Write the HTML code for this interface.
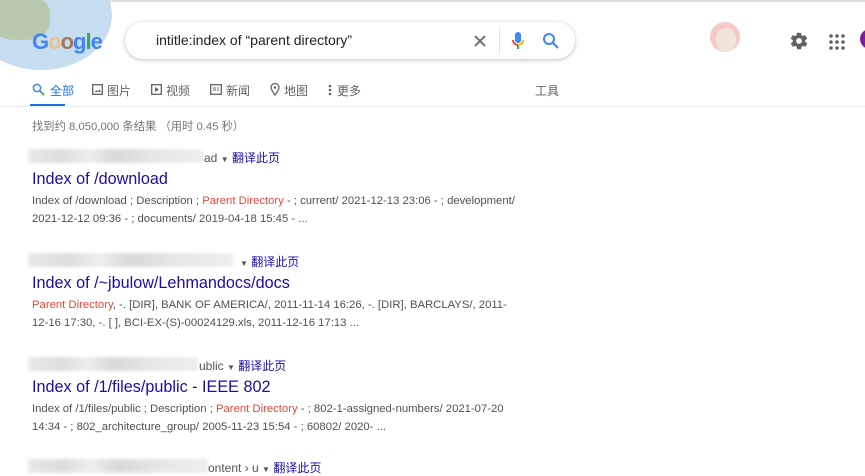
<!DOCTYPE html><html><head><meta charset="utf-8"><style>
*{margin:0;padding:0;box-sizing:border-box}
body{width:865px;height:470px;overflow:hidden;background:#fff;font-family:"Liberation Sans","Noto Sans CJK SC",sans-serif;position:relative}
.a{position:absolute;white-space:nowrap}
.blur{position:absolute;height:14px;background:linear-gradient(90deg,#e8e8e8,#ddd 20%,#eee 35%,#d8d8d8 50%,#e6e6e6 70%,#eee);filter:blur(1.5px)}
.u{font-size:12px;color:#555}
.tr{color:#1a0dab;font-size:12px}
.t{font-size:16.2px;color:#1a0dab}
.s{font-size:11.3px;color:#4d5156;line-height:18px}
.r{color:#e8463b}
.tab{position:absolute;top:82px;font-size:12px;color:#5f6368}
</style></head><body>
<div class="a" style="left:0;top:0;width:865px;height:2px;background:#e0e0e0"></div>
<div class="a" style="left:-30px;top:-40px;width:142px;height:110px;border-radius:50%;background:#c6dcef"></div>
<div class="a" style="left:-10px;top:-5px;width:60px;height:45px;border-radius:40%;background:#b9c9ad"></div>
<div class="a" style="left:32px;top:29px;font-size:22px;font-weight:bold;letter-spacing:-1px"><span style="color:#4285f4">G</span><span style="color:#f4c08a">o</span><span style="color:#a0785e">o</span><span style="color:#4285f4">g</span><span style="color:#34a853">l</span><span style="color:#4285f4">e</span></div>
<div class="a" style="left:125px;top:22px;width:450px;height:37px;border-radius:19px;background:#fff;box-shadow:0 1px 5px rgba(0,0,0,.25)"></div>
<div class="a" style="left:156px;top:32px;font-size:14px;color:#202124">intitle:index of “parent directory”</div>
<svg class="a" style="left:472px;top:33px" width="16" height="16"><path d="M3 3L13 13M13 3L3 13" stroke="#70757a" stroke-width="2"/></svg>
<div class="a" style="left:499px;top:28px;width:1px;height:26px;background:#dfe1e5"></div>
<svg class="a" style="left:511px;top:31px" width="14" height="20"><rect x="4" y="1" width="6" height="11" rx="3" fill="#4285f4"/><path d="M2 9a5 5 0 0010 0" stroke="#ea4335" stroke-width="1.8" fill="none"/><path d="M7 14v4" stroke="#34a853" stroke-width="2"/><path d="M12 9a5 5 0 01-5 5" stroke="#fbbc05" stroke-width="1.8" fill="none"/></svg>
<svg class="a" style="left:542px;top:32px" width="18" height="18"><circle cx="7" cy="7" r="5" stroke="#4285f4" stroke-width="2" fill="none"/><path d="M11 11l5 5" stroke="#4285f4" stroke-width="2.2"/></svg>
<div class="a" style="left:710px;top:22px;width:30px;height:30px;border-radius:50%;background:#f6c8c6"></div>
<div class="a" style="left:716px;top:28px;width:20px;height:24px;border-radius:45%;background:#efe3da"></div>
<svg class="a" style="left:789px;top:31px" width="20" height="20" viewBox="0 0 24 24"><path fill="#5f6368" d="M19.4 13c0-.3.1-.7.1-1s0-.7-.1-1l2.1-1.6c.2-.2.2-.4.1-.6l-2-3.5c-.1-.2-.4-.3-.6-.2l-2.5 1c-.5-.4-1.1-.7-1.700-1l-.4-2.6c0-.2-.2-.4-.5-.4h-4c-.2 0-.4.2-.5.4l-.4 2.6c-.6.3-1.2.6-1.7 1l-2.5-1c-.2-.1-.5 0-.6.2l-2 3.5c-.1.2-.1.5.1.6L4.6 11c0 .3-.1.7-.1 1s0 .7.1 1l-2.1 1.6c-.2.2-.2.4-.1.6l2 3.5c.1.2.4.3.6.2l2.5-1c.5.4 1.1.7 1.7 1l.4 2.6c0 .2.2.4.5.4h4c.2 0 .4-.2.5-.4l.4-2.6c.6-.3 1.2-.6 1.7-1l2.5 1c.2.1.5 0 .6-.2l2-3.5c.1-.2.1-.5-.1-.6L19.4 13zM12 15.5a3.5 3.5 0 110-7 3.5 3.5 0 010 7z"/><circle cx="12" cy="12" r="2.3" fill="#fff"/></svg>
<svg class="a" style="left:829px;top:34px" width="16" height="16"><g fill="#5f6368"><circle cx="2" cy="2" r="1.8"/><circle cx="8" cy="2" r="1.8"/><circle cx="14" cy="2" r="1.8"/><circle cx="2" cy="8" r="1.8"/><circle cx="8" cy="8" r="1.8"/><circle cx="14" cy="8" r="1.8"/><circle cx="2" cy="14" r="1.8"/><circle cx="8" cy="14" r="1.8"/><circle cx="14" cy="14" r="1.8"/></g></svg>
<div class="a" style="left:860px;top:29px;width:20px;height:20px;border-radius:50%;background:#7b1fa2"></div>
<svg class="a" style="left:32px;top:83px" width="13" height="13"><circle cx="5" cy="5" r="3.6" stroke="#4285f4" stroke-width="1.5" fill="none"/><path d="M8 8l4 4" stroke="#34a853" stroke-width="1.6"/></svg>
<div class="tab" style="left:50px;color:#1a73e8">全部</div>
<div class="a" style="left:30px;top:104px;width:35px;height:3px;background:#1a73e8"></div>
<svg class="a" style="left:92px;top:84px" width="11" height="11"><rect x=".7" y=".7" width="9.6" height="9.6" stroke="#5f6368" fill="none" stroke-width="1.3"/><path d="M2.5 8l2-2 1.5 1.5 1.5-2 1.5 2.5z" fill="#5f6368"/></svg>
<div class="tab" style="left:107px">图片</div>
<svg class="a" style="left:151px;top:84px" width="11" height="11"><rect x=".7" y=".7" width="9.6" height="9.6" stroke="#5f6368" fill="none" stroke-width="1.3"/><path d="M4 3v5l4-2.5z" fill="#5f6368"/></svg>
<div class="tab" style="left:166px">视频</div>
<svg class="a" style="left:210px;top:84px" width="12" height="11"><rect x=".7" y=".7" width="10.6" height="9.6" stroke="#5f6368" fill="none" stroke-width="1.3"/><path d="M3 4h3M3 6h3M7 4h2M7 6h2" stroke="#5f6368"/></svg>
<div class="tab" style="left:226px">新闻</div>
<svg class="a" style="left:270px;top:83px" width="10" height="13"><path d="M5 12C2 8 1 6 1 4.5a4 4 0 018 0C9 6 8 8 5 12z" stroke="#5f6368" fill="none" stroke-width="1.3"/><circle cx="5" cy="4.5" r="1.3" fill="#5f6368"/></svg>
<div class="tab" style="left:284px">地图</div>
<svg class="a" style="left:328px;top:84px" width="4" height="12"><circle cx="2" cy="2" r="1.3" fill="#5f6368"/><circle cx="2" cy="6" r="1.3" fill="#5f6368"/><circle cx="2" cy="10" r="1.3" fill="#5f6368"/></svg>
<div class="tab" style="left:337px">更多</div>
<div class="tab" style="left:535px">工具</div>
<div class="a" style="left:0;top:106px;width:865px;height:1px;background:#ebebeb"></div>
<div class="a" style="left:32px;top:118px;font-size:11.3px;color:#70757a">找到约 8,050,000 条结果 （用时 0.45 秒）</div>

<div class="blur" style="left:28px;top:149px;width:175px"></div>
<div class="a u" style="left:204px;top:149px">ad <span style="font-size:8px">▼</span> <span class="tr">翻译此页</span></div>
<div class="a t" style="left:32px;top:170px">Index of /download</div>
<div class="a s" style="left:32px;top:192px">Index of /download ; Description ; <span class="r">Parent Directory</span> - ; current/ 2021-12-13 23:06 - ; development/<br>2021-12-12 09:36 - ; documents/ 2019-04-18 15:45 - ...</div>

<div class="blur" style="left:28px;top:253px;width:205px"></div>
<div class="a u" style="left:240px;top:253px"><span style="font-size:8px">▼</span> <span class="tr">翻译此页</span></div>
<div class="a t" style="left:32px;top:274px">Index of /~jbulow/Lehmandocs/docs</div>
<div class="a s" style="left:32px;top:296px"><span class="r">Parent Directory</span>, -. [DIR], BANK OF AMERICA/, 2011-11-14 16:26, -. [DIR], BARCLAYS/, 2011-<br>12-16 17:30, -. [ ], BCI-EX-(S)-00024129.xls, 2011-12-16 17:13 ...</div>

<div class="blur" style="left:28px;top:357px;width:170px"></div>
<div class="a u" style="left:199px;top:357px">ublic <span style="font-size:8px">▼</span> <span class="tr">翻译此页</span></div>
<div class="a t" style="left:32px;top:378px">Index of /1/files/public - IEEE 802</div>
<div class="a s" style="left:32px;top:400px">Index of /1/files/public ; Description ; <span class="r">Parent Directory</span> - ; 802-1-assigned-numbers/ 2021-07-20<br>14:34 - ; 802_architecture_group/ 2005-11-23 15:54 - ; 60802/ 2020- ...</div>

<div class="blur" style="left:28px;top:459px;width:180px"></div>
<div class="a u" style="left:208px;top:459px">ontent › u <span style="font-size:8px">▼</span> <span class="tr">翻译此页</span></div>
</body></html>
